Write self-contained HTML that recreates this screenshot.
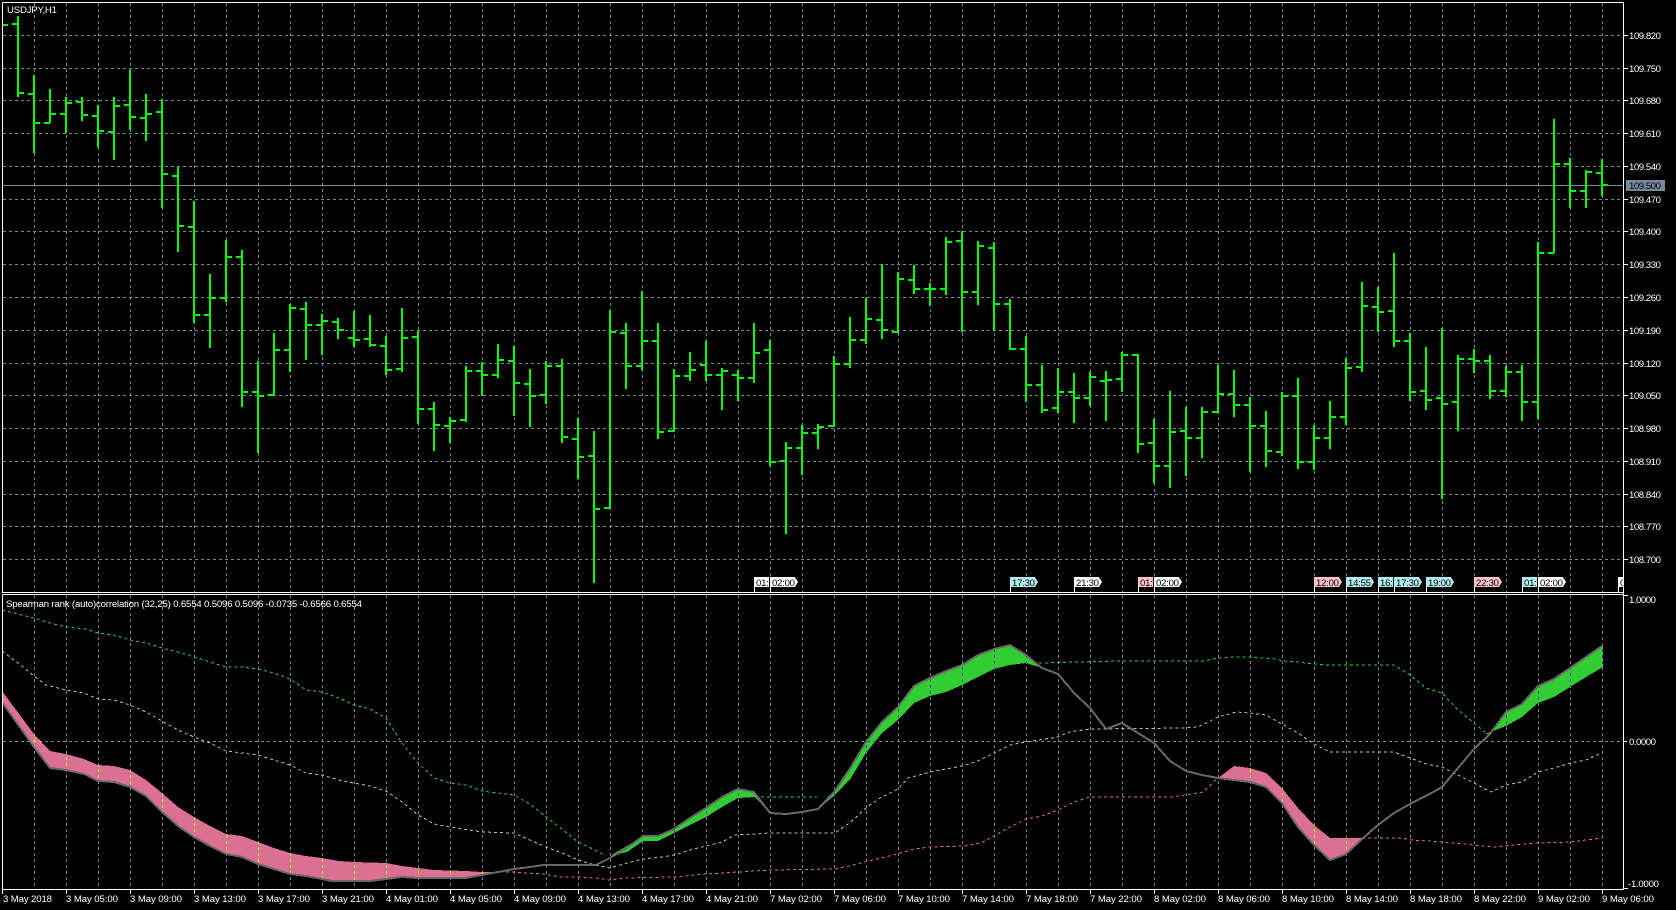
<!DOCTYPE html>
<html><head><meta charset="utf-8"><title>USDJPY,H1</title>
<style>
html,body{margin:0;padding:0;background:#000;width:1676px;height:910px;overflow:hidden}
svg{display:block}
text{font-family:"Liberation Sans",sans-serif;font-size:9.6px;fill:#fff}
.c{shape-rendering:crispEdges}
.m text{fill:#000}
</style></head><body>
<svg width="1676" height="910" viewBox="0 0 1676 910" xmlns="http://www.w3.org/2000/svg">
<defs>
<path id="vx" d="M34.5 0V1M66.5 0V1M98.5 0V1M130.5 0V1M162.5 0V1M194.5 0V1M226.5 0V1M258.5 0V1"/>
<path id="v1" d="M34.5 3V592M66.5 3V592M98.5 3V592M130.5 3V592M162.5 3V592M194.5 3V592M226.5 3V592M258.5 3V592M290.5 3V592M322.5 3V592M354.5 3V592M386.5 3V592M418.5 3V592M450.5 3V592M482.5 3V592M514.5 3V592M546.5 3V592M578.5 3V592M610.5 3V592M642.5 3V592M674.5 3V592M706.5 3V592M738.5 3V592M770.5 3V592M802.5 3V592M834.5 3V592M866.5 3V592M898.5 3V592M930.5 3V592M962.5 3V592M994.5 3V592M1026.5 3V592M1058.5 3V592M1090.5 3V592M1122.5 3V592M1154.5 3V592M1186.5 3V592M1218.5 3V592M1250.5 3V592M1282.5 3V592M1314.5 3V592M1346.5 3V592M1378.5 3V592M1410.5 3V592M1442.5 3V592M1474.5 3V592M1506.5 3V592M1538.5 3V592M1570.5 3V592M1602.5 3V592"/>
<path id="v2" d="M34.5 595V889M66.5 595V889M98.5 595V889M130.5 595V889M162.5 595V889M194.5 595V889M226.5 595V889M258.5 595V889M290.5 595V889M322.5 595V889M354.5 595V889M386.5 595V889M418.5 595V889M450.5 595V889M482.5 595V889M514.5 595V889M546.5 595V889M578.5 595V889M610.5 595V889M642.5 595V889M674.5 595V889M706.5 595V889M738.5 595V889M770.5 595V889M802.5 595V889M834.5 595V889M866.5 595V889M898.5 595V889M930.5 595V889M962.5 595V889M994.5 595V889M1026.5 595V889M1058.5 595V889M1090.5 595V889M1122.5 595V889M1154.5 595V889M1186.5 595V889M1218.5 595V889M1250.5 595V889M1282.5 595V889M1314.5 595V889M1346.5 595V889M1378.5 595V889M1410.5 595V889M1442.5 595V889M1474.5 595V889M1506.5 595V889M1538.5 595V889M1570.5 595V889M1602.5 595V889M3 741.5H1623"/>
<polygon id="pk1" points="2,691 34,734 50,751 66,754 84,759 98,765 114,766 130,770 146,780 162,793 178,807 194,817 210,826 226,834 242,836 258,842 274,848 290,853 306,856 322,858 339,861 354,862 386,863 402,866 418,868 434,870 466,871 482,872 500,872 482,875 466,878 418,878 402,877 386,879 370,881 332,881 322,879 306,876 290,874 274,869 258,864 242,857 226,854 210,846 194,837 178,826 162,812 146,796 130,787 114,782 98,781 84,774 66,770 50,768 34,747 2,702"/>
<polygon id="pk2" points="1218,778 1234,766 1250,768 1266,773 1282,788 1298,808 1314,825 1330,838 1362,838 1346,854 1330,860 1314,845 1298,827 1282,803 1266,787 1250,782 1234,780"/>
<polygon id="gr1" points="606,857 610,856 627,846 643,836 658,836 674,829 690,818 706,808 722,797 738,789 754,792 768,811 755,797 738,798 722,807 706,817 690,825 674,833 658,841 643,841 627,852"/>
<polygon id="gr2" points="820,807 835,791 851,767 866,742 882,722 898,707 914,686 930,678 946,671 962,665 978,655 994,649 1010,645 1026,655 1042,668 1026,663 1010,665 994,669 978,677 962,685 946,692 930,696 914,703 898,720 882,733 866,753 851,778 835,795"/>
<polygon id="gr3" points="1485,734 1490,734 1506,712 1522,704 1538,686 1554,679 1570,668 1586,657 1603,646 1603,667 1586,677 1570,687 1554,697 1538,703 1522,717 1506,726"/>
<clipPath id="cp"><use href="#pk1"/><use href="#pk2"/></clipPath>
<clipPath id="cg"><use href="#gr1"/><use href="#gr2"/><use href="#gr3"/></clipPath>
<clipPath id="t1"><rect x="754" y="570" width="15" height="24"/></clipPath>
<clipPath id="t2"><rect x="1138" y="570" width="15" height="24"/></clipPath>
<clipPath id="t3"><rect x="1378" y="570" width="15" height="24"/></clipPath>
<clipPath id="t4"><rect x="1522" y="570" width="15" height="24"/></clipPath>
<clipPath id="t5"><rect x="1618" y="570" width="5" height="24"/></clipPath>
</defs>

<rect width="1676" height="910" fill="#000"/>

<!-- grid -->
<g class="c" fill="none" stroke="#778899" stroke-width="1" stroke-dasharray="3 3">
<use href="#v1"/>
<use href="#v2"/>
<path d="M3 35.5H1623M3 68.5H1623M3 100.5H1623M3 133.5H1623M3 166.5H1623M3 199.5H1623M3 231.5H1623M3 264.5H1623M3 297.5H1623M3 330.5H1623M3 363.5H1623M3 395.5H1623M3 428.5H1623M3 461.5H1623M3 494.5H1623M3 526.5H1623M3 559.5H1623"/>
</g>

<!-- current price line -->
<path class="c" d="M3 185.5H1623" stroke="#778899" stroke-width="1"/>

<!-- OHLC bars -->
<path class="c" fill="none" stroke="#00ff00" stroke-width="2" d="M3 25H8
M18 16V97M12 24H18M18 93H24
M34 75V153M28 94H34M34 123H40
M50 89V123M44 123H50M50 114H56
M66 97V133M60 114H66M66 103H72
M82 97V121M76 102H82M82 115H88
M98 105V147M92 116H98M98 131H104
M114 97V160M108 132H114M114 106H120
M130 70V130M124 105H130M130 117H136
M146 94V141M140 118H146M146 114H152
M162 99V208M156 112H162M162 174H168
M178 167V252M172 176H178M178 226H184
M194 201V323M188 227H194M194 315H200
M210 274V348M204 315H210M210 298H216
M226 240V302M220 298H226M226 257H232
M242 250V407M236 257H242M242 392H248
M258 361V453M252 392H258M258 396H264
M274 333V395M268 395H274M274 350H280
M290 304V372M284 350H290M290 308H296
M306 302V360M300 309H306M306 325H312
M322 314V355M316 325H322M322 321H328
M338 318V339M332 322H338M338 330H344
M354 311V347M348 338H354M354 340H360
M370 315V347M364 339H370M370 345H376
M386 336V375M380 346H386M386 370H392
M402 308V372M396 369H402M402 338H408
M418 331V424M412 337H418M418 409H424
M434 402V451M428 409H434M434 425H440
M450 417V443M444 426H450M450 421H456
M466 366V422M460 420H466M466 371H472
M482 362V396M476 371H482M482 375H488
M498 344V378M492 375H498M498 360H504
M514 346V416M508 361H514M514 383H520
M530 369V427M524 384H530M530 396H536
M546 361V404M540 395H546M546 366H552
M562 359V443M556 366H562M562 437H568
M578 418V479M572 439H578M578 457H584
M594 431V583M588 456H594M594 509H600
M610 310V508M604 508H610M610 332H616
M626 323V389M620 333H626M626 366H632
M642 291V370M636 366H642M642 341H648
M658 323V439M652 341H658M658 432H664
M674 369V431M668 431H674M674 376H680
M690 352V381M684 376H690M690 370H696
M706 341V381M700 365H706M706 375H712
M722 368V410M716 375H722M722 371H728
M738 370V401M732 375H738M738 378H744
M754 323V383M748 378H754M754 353H760
M770 340V466M764 350H770M770 462H776
M786 442V534M780 461H786M786 448H792
M802 425V475M796 448H802M802 433H808
M818 424V449M812 433H818M818 427H824
M834 356V427M828 426H834M834 364H840
M850 317V368M844 364H850M850 340H856
M866 298V344M860 340H866M866 319H872
M882 264V339M876 320H882M882 330H888
M898 272V333M892 332H898M898 279H904
M914 265V294M908 280H914M914 289H920
M930 283V306M924 289H930M930 289H936
M946 237V295M940 289H946M946 242H952
M962 231V332M956 241H962M962 292H968
M978 241V305M972 292H978M978 246H984
M994 242V331M988 248H994M994 304H1000
M1010 299V350M1004 304H1010M1010 349H1016
M1026 336V402M1020 349H1026M1026 385H1032
M1042 365V413M1036 385H1042M1042 410H1048
M1058 368V413M1052 408H1058M1058 392H1064
M1074 373V423M1068 392H1074M1074 398H1080
M1090 372V406M1084 398H1090M1090 377H1096
M1106 371V421M1100 381H1106M1106 380H1112
M1122 352V392M1116 379H1122M1122 355H1128
M1138 354V453M1132 355H1138M1138 444H1144
M1154 419V483M1148 443H1154M1154 466H1160
M1170 391V488M1164 466H1170M1170 432H1176
M1186 407V476M1180 431H1186M1186 438H1192
M1202 407V458M1196 438H1202M1202 412H1208
M1218 365V413M1212 412H1218M1218 394H1224
M1234 370V417M1228 394H1234M1234 405H1240
M1250 397V472M1244 405H1250M1250 426H1256
M1266 411V467M1260 426H1266M1266 451H1272
M1282 392V456M1276 452H1282M1282 396H1288
M1298 378V469M1292 396H1298M1298 462H1304
M1314 425V470M1308 462H1314M1314 438H1320
M1330 401V449M1324 438H1330M1330 417H1336
M1346 358V425M1340 417H1346M1346 368H1352
M1362 282V372M1356 367H1362M1362 306H1368
M1378 287V332M1372 307H1378M1378 312H1384
M1394 253V347M1388 311H1394M1394 341H1400
M1410 333V401M1404 341H1410M1410 392H1416
M1426 347V410M1420 391H1426M1426 400H1432
M1442 328V499M1436 398H1442M1442 404H1448
M1458 355V431M1452 402H1458M1458 359H1464
M1474 349V373M1468 359H1474M1474 361H1480
M1490 355V399M1484 361H1490M1490 391H1496
M1506 366V397M1500 391H1506M1506 372H1512
M1522 365V421M1516 372H1522M1522 402H1528
M1538 242V419M1532 402H1538M1538 253H1544
M1554 119V253M1548 253H1554M1554 164H1560
M1570 158V208M1564 164H1570M1570 191H1576
M1586 170V208M1580 191H1586M1586 172H1592
M1602 159V196M1596 173H1602M1602 185H1608"/>

<!-- indicator fills -->
<g class="c">
<use href="#pk1" fill="#DB7093"/><use href="#pk2" fill="#DB7093"/>
<use href="#gr1" fill="#32CD32"/><use href="#gr2" fill="#32CD32"/><use href="#gr3" fill="#32CD32"/>
<g clip-path="url(#cp)"><use href="#v2" fill="none" stroke="#acf80a" stroke-width="1" stroke-dasharray="3 3"/></g>
<g clip-path="url(#cg)"><use href="#v2" fill="none" stroke="#4545ab" stroke-width="1" stroke-dasharray="3 3"/></g>
</g>

<!-- indicator dotted lines -->
<g class="c" fill="none" stroke-width="1" stroke-dasharray="3 3">
<polyline stroke="#C0C0C0" points="2,651 18,663 34,676 46,685 66,690 84,693 98,699 114,700 130,705 146,712 162,721 178,730 194,737 210,743 226,751 242,753 258,755 274,760 290,765 306,773 322,775 339,780 354,783 370,786 386,791 402,802 418,815 434,824 450,827 482,832 514,833 530,840 546,847 562,853 578,860 595,865 610,868 627,863 643,859 662,857 674,855 690,850 706,846 722,842 735,835 770,833 835,833 851,822 866,808 880,798 898,789 908,778 930,772 962,766 978,761 994,753 1010,745 1026,742 1058,737 1069,732 1090,729 1184,728 1198,727 1218,717 1236,712 1250,713 1266,715 1282,724 1298,733 1314,744 1330,752 1394,752 1410,758 1426,764 1442,767 1458,775 1474,783 1491,792 1506,785 1522,782 1538,772 1554,768 1570,763 1586,760 1602,753"/>
<polyline stroke="#32CD32" points="2,610 34,618 50,623 66,627 86,629 98,633 114,635 130,640 146,643 162,648 178,652 194,657 210,662 226,667 242,667 258,669 274,673 290,679 306,690 322,692 339,698 354,705 370,709 386,718 402,743 418,763 434,778 450,783 466,785 482,791 514,795 530,804 546,817 562,829 578,842 595,850 606,856"/>
<polyline stroke="#32CD32" points="755,797 817,797"/>
<polyline stroke="#32CD32" points="1039,663 1120,661 1177,661 1203,661 1218,658 1234,657 1250,657 1277,659 1282,661 1298,662 1314,664 1330,665 1394,665 1410,675 1426,688 1442,693 1458,710 1474,723 1486,733"/>
<polyline stroke="#DB7093" points="500,872 511,872 543,874 560,877 578,877 595,878 610,880 624,878 674,877 706,874 738,872 770,870 835,869 849,866 865,862 897,854 914,849 930,847 964,846 981,843 994,836 1010,827 1026,819 1042,816 1058,810 1074,802 1090,797 1171,797 1186,795 1203,792 1218,778"/>
<polyline stroke="#DB7093" points="1362,838 1402,838 1412,840 1443,842 1455,843 1473,845 1495,847 1522,844 1538,843 1570,842 1602,838"/>
</g>

<!-- main gray line -->
<polyline class="c" fill="none" stroke="#696969" stroke-width="2" points="2,702 34,747 50,768 66,770 84,774 98,781 114,782 130,787 146,796 162,812 178,826 194,837 210,846 226,854 242,857 258,864 274,869 290,874 306,876 322,879 332,881 370,881 386,879 402,877 418,878 466,878 482,875 498,872 514,869 530,867 543,865 596,865 610,858 627,848 643,836 658,836 674,829 690,818 706,808 722,797 738,789 754,792 770,813 786,814 802,812 818,809 835,791 851,767 866,742 882,722 898,707 914,686 930,678 946,671 962,665 978,655 994,649 1010,645 1026,655 1042,668 1058,674 1074,693 1090,708 1106,729 1122,723 1138,733 1154,743 1170,761 1186,771 1202,775 1218,778 1234,780 1250,782 1266,787 1282,803 1298,827 1314,845 1330,860 1346,854 1362,839 1378,825 1394,813 1410,804 1426,796 1442,787 1458,768 1474,749 1490,734 1506,712 1522,704 1538,686 1554,679 1570,668 1586,657 1602,646"/>

<!-- frames & ticks -->
<path class="c" fill="none" stroke="#fff" stroke-width="1" d="M2.5 2.5H1623.5V889.5M2.5 2.5V592.5H1623.5M2.5 594.5H1623.5M2.5 594.5V889.5H1623.5
M1624 35.5H1628M1624 68.5H1628M1624 100.5H1628M1624 133.5H1628M1624 166.5H1628M1624 199.5H1628M1624 231.5H1628M1624 264.5H1628M1624 297.5H1628M1624 330.5H1628M1624 363.5H1628M1624 395.5H1628M1624 428.5H1628M1624 461.5H1628M1624 494.5H1628M1624 526.5H1628M1624 559.5H1628
M1624 595.5H1628M1624 741.5H1627M1624 888.5H1628
M2.5 890V894M66.5 890V894M130.5 890V894M194.5 890V894M258.5 890V894M322.5 890V894M386.5 890V894M450.5 890V894M514.5 890V894M578.5 890V894M642.5 890V894M706.5 890V894M770.5 890V894M834.5 890V894M898.5 890V894M962.5 890V894M1026.5 890V894M1090.5 890V894M1154.5 890V894M1218.5 890V894M1282.5 890V894M1346.5 890V894M1410.5 890V894M1474.5 890V894M1538.5 890V894M1602.5 890V894"/>

<!-- price box -->
<rect class="c" x="1626" y="180" width="39" height="11" fill="#778899"/>

<!-- axis labels -->
<g>
<text x="1629" y="39" textLength="32">109.820</text>
<text x="1629" y="72" textLength="32">109.750</text>
<text x="1629" y="104" textLength="32">109.680</text>
<text x="1629" y="137" textLength="32">109.610</text>
<text x="1629" y="170" textLength="32">109.540</text>
<text x="1629" y="189" textLength="32" style="fill:#000">109.500</text>
<text x="1629" y="203" textLength="32">109.470</text>
<text x="1629" y="235" textLength="32">109.400</text>
<text x="1629" y="268" textLength="32">109.330</text>
<text x="1629" y="301" textLength="32">109.260</text>
<text x="1629" y="334" textLength="32">109.190</text>
<text x="1629" y="367" textLength="32">109.120</text>
<text x="1629" y="399" textLength="32">109.050</text>
<text x="1629" y="432" textLength="32">108.980</text>
<text x="1629" y="465" textLength="32">108.910</text>
<text x="1629" y="498" textLength="32">108.840</text>
<text x="1629" y="530" textLength="32">108.770</text>
<text x="1629" y="563" textLength="32">108.700</text>
<text x="1629" y="603" textLength="27">1.0000</text>
<text x="1629" y="745" textLength="27">0.0000</text>
<text x="1628" y="887" textLength="31">-1.0000</text>

<text x="7" y="13" textLength="50">USDJPY,H1</text>
<text x="6" y="607" textLength="356">Spearman rank (auto)correlation (32,25) 0.6554 0.5096 0.5096 -0.0735 -0.6566 0.6554</text>

<text x="3" y="902" textLength="49">3 May 2018</text>
<text x="66" y="902" textLength="52">3 May 05:00</text>
<text x="130" y="902" textLength="52">3 May 09:00</text>
<text x="194" y="902" textLength="52">3 May 13:00</text>
<text x="258" y="902" textLength="52">3 May 17:00</text>
<text x="322" y="902" textLength="52">3 May 21:00</text>
<text x="386" y="902" textLength="52">4 May 01:00</text>
<text x="450" y="902" textLength="52">4 May 05:00</text>
<text x="514" y="902" textLength="52">4 May 09:00</text>
<text x="578" y="902" textLength="52">4 May 13:00</text>
<text x="642" y="902" textLength="52">4 May 17:00</text>
<text x="706" y="902" textLength="52">4 May 21:00</text>
<text x="770" y="902" textLength="52">7 May 02:00</text>
<text x="834" y="902" textLength="52">7 May 06:00</text>
<text x="898" y="902" textLength="52">7 May 10:00</text>
<text x="962" y="902" textLength="52">7 May 14:00</text>
<text x="1026" y="902" textLength="52">7 May 18:00</text>
<text x="1090" y="902" textLength="52">7 May 22:00</text>
<text x="1154" y="902" textLength="52">8 May 02:00</text>
<text x="1218" y="902" textLength="52">8 May 06:00</text>
<text x="1282" y="902" textLength="52">8 May 10:00</text>
<text x="1346" y="902" textLength="52">8 May 14:00</text>
<text x="1410" y="902" textLength="52">8 May 18:00</text>
<text x="1474" y="902" textLength="52">8 May 22:00</text>
<text x="1538" y="902" textLength="52">9 May 02:00</text>
<text x="1602" y="902" textLength="52">9 May 06:00</text>
</g>

<!-- event markers -->
<g class="m">
<g clip-path="url(#t1)"><path class="c" fill="#fff" d="M754 577h29l3 5-3 5h-28v5h-1z"/><text x="756" y="586" textLength="23">01:00</text></g>
<path class="c" fill="#fff" d="M770 577h25l3 5-3 5h-24v5h-1z"/><text x="772" y="586" textLength="23">02:00</text>
<path class="c" fill="#AFEEEE" d="M1010 577h25l3 5-3 5h-24v5h-1z"/><path class="c" fill="#fff" d="M1010 587h1v5h-1z"/><text x="1012" y="586" textLength="23">17:30</text>
<path class="c" fill="#fff" d="M1074 577h25l3 5-3 5h-24v5h-1z"/><text x="1076" y="586" textLength="23">21:30</text>
<g clip-path="url(#t2)"><path class="c" fill="#FFC0CB" d="M1138 577h29v10h-28v5h-1z"/><path class="c" fill="#fff" d="M1138 587h1v5h-1z"/><text x="1140" y="586" textLength="23">01:00</text></g>
<path class="c" fill="#fff" d="M1154 577h25l3 5-3 5h-24v5h-1z"/><text x="1156" y="586" textLength="23">02:00</text>
<path class="c" fill="#FFC0CB" d="M1314 577h25l3 5-3 5h-24v5h-1z"/><path class="c" fill="#fff" d="M1314 587h1v5h-1z"/><text x="1316" y="586" textLength="23">12:00</text>
<path class="c" fill="#AFEEEE" d="M1346 577h25l3 5-3 5h-24v5h-1z"/><path class="c" fill="#fff" d="M1346 587h1v5h-1z"/><text x="1348" y="586" textLength="23">14:55</text>
<g clip-path="url(#t3)"><path class="c" fill="#AFEEEE" d="M1378 577h29v10h-28v5h-1z"/><path class="c" fill="#fff" d="M1378 587h1v5h-1z"/><text x="1380" y="586" textLength="23">16:00</text></g>
<path class="c" fill="#AFEEEE" d="M1394 577h25l3 5-3 5h-24v5h-1z"/><path class="c" fill="#fff" d="M1394 587h1v5h-1z"/><text x="1396" y="586" textLength="23">17:30</text>
<path class="c" fill="#AFEEEE" d="M1426 577h25l3 5-3 5h-24v5h-1z"/><path class="c" fill="#fff" d="M1426 587h1v5h-1z"/><text x="1428" y="586" textLength="23">19:00</text>
<path class="c" fill="#FFC0CB" d="M1474 577h25l3 5-3 5h-24v5h-1z"/><path class="c" fill="#fff" d="M1474 587h1v5h-1z"/><text x="1476" y="586" textLength="23">22:30</text>
<g clip-path="url(#t4)"><path class="c" fill="#AFEEEE" d="M1522 577h29v10h-28v5h-1z"/><path class="c" fill="#fff" d="M1522 587h1v5h-1z"/><text x="1524" y="586" textLength="23">01:00</text></g>
<path class="c" fill="#fff" d="M1538 577h25l3 5-3 5h-24v5h-1z"/><text x="1540" y="586" textLength="23">02:00</text>
<g clip-path="url(#t5)"><path class="c" fill="#fff" d="M1618 577h29v10h-28v5h-1z"/><text x="1620" y="586" textLength="23">02:00</text></g>
</g>
</svg>
</body></html>
